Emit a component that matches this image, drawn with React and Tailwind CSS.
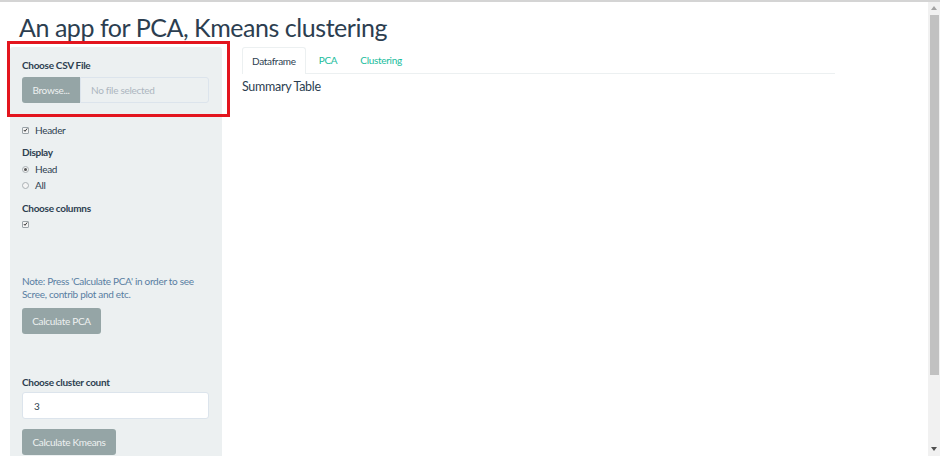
import React from 'react'

const font = { fontFamily: 'Lato, "Open Sans", sans-serif' }

const Check = () => (
  <span className="inline-flex items-center justify-center w-[7px] h-[7px] border border-[#9aa3a8] bg-[#f4f4f4] rounded-[1px] mr-[6px]">
    <svg width="6" height="6" viewBox="0 0 6 6">
      <path d="M1 3 L2.4 4.6 L5 1.2" stroke="#333" strokeWidth="1.2" fill="none" />
    </svg>
  </span>
)

const Radio = ({ on }) => (
  <span className="inline-flex items-center justify-center w-[7px] h-[7px] rounded-full border border-[#a9b0b4] bg-[#f4f4f4] mr-[6px]">
    {on && <span className="w-[3px] h-[3px] rounded-full bg-[#555]" />}
  </span>
)

const Btn = ({ children, w }) => (
  <div className={`${w} h-[26px] rounded-[3px] bg-[#95a5a6] text-[#eef1f1] text-[10px] flex items-center justify-center`}>
    {children}
  </div>
)

export default function App() {
  return (
    <div className="relative w-[940px] h-[456px] overflow-hidden bg-white border-t-2 border-[#d4d4d4] flex text-[#2c3e50]" style={font}>
      <div className="w-[928px] h-full">
        <h1 className="mt-[10px] ml-[19px] text-[25px] leading-[30px] font-normal tracking-[-0.45px]">
          An app for PCA, Kmeans clustering
        </h1>
        <div className="flex mt-[5px]">
          {/* sidebar */}
          <div className="ml-[10px] w-[212px] h-[420px] bg-[#ecf0f1] rounded-t-[3px] px-[12px] pt-[11px] text-[10px] leading-[14px] tracking-[-0.3px]">
            <div className="font-bold">Choose CSV File</div>
            <div className="flex mt-[5px] w-[187px]">
              <div className="w-[58px] h-[26px] rounded-l-[3px] bg-[#95a5a6] text-[#eef1f1] flex items-center justify-center">
                Browse...
              </div>
              <div className="flex-1 h-[26px] border border-[#dce4ec] bg-[#ecf0f1] rounded-r-[3px] flex items-center pl-[10px] text-[#acb6c0]">
                No file selected
              </div>
            </div>
            <div className="mt-[20px] flex items-center"><Check />Header</div>
            <div className="mt-[8px] font-bold">Display</div>
            <div className="mt-[3px] flex items-center"><Radio on />Head</div>
            <div className="mt-[2px] flex items-center"><Radio />All</div>
            <div className="mt-[9px] font-bold">Choose columns</div>
            <div className="mt-[2px] h-[14px] flex items-center"><Check /></div>
            <div className="mt-[44px] text-[#597ea2] leading-[13px]">
              Note: Press 'Calculate PCA' in order to see<br />Scree, contrib plot and etc.
            </div>
            <div className="mt-[7px]"><Btn w="w-[79px]">Calculate PCA</Btn></div>
            <div className="mt-[41px] font-bold">Choose cluster count</div>
            <div className="mt-[3px] w-[187px] h-[27px] bg-white border border-[#dce4ec] rounded-[3px] flex items-center pl-[11px]">
              3
            </div>
            <div className="mt-[10px]"><Btn w="w-[94px]">Calculate Kmeans</Btn></div>
          </div>
          {/* main */}
          <div className="ml-[20px] w-[593px]">
            <div className="flex h-[27px] border-b border-[#ecf0f1] text-[10px] tracking-[-0.3px]">
              <div className="h-[27px] px-[9px] flex items-center bg-white border border-b-0 border-[#ecf0f1] rounded-t-[3px]">
                Dataframe
              </div>
              <div className="ml-[3px] px-[10px] flex items-center text-[#18bc9c]">PCA</div>
              <div className="ml-[3px] px-[10px] flex items-center text-[#18bc9c]">Clustering</div>
            </div>
            <div className="mt-[5px] text-[12.5px] leading-[16px] tracking-[-0.3px]">Summary Table</div>
          </div>
        </div>
      </div>
      {/* scrollbar */}
      <div className="w-[12px] h-full bg-[#f1f1f1] flex flex-col items-center">
        <svg width="6" height="4" className="mt-[4px]" viewBox="0 0 6 4"><path d="M3 0 L6 4 L0 4 Z" fill="#a3a3a3" /></svg>
        <div className="mt-[5px] w-[9px] h-[360px] bg-[#c1c1c1]" />
        <div className="flex-1" />
        <svg width="6" height="4" className="mb-[5px]" viewBox="0 0 6 4"><path d="M0 0 L6 0 L3 4 Z" fill="#505050" /></svg>
      </div>
      {/* annotation */}
      <div className="absolute left-[7px] top-[39px] w-[223px] h-[76px] border-[3px] border-[#e3151e]" />
    </div>
  )
}
